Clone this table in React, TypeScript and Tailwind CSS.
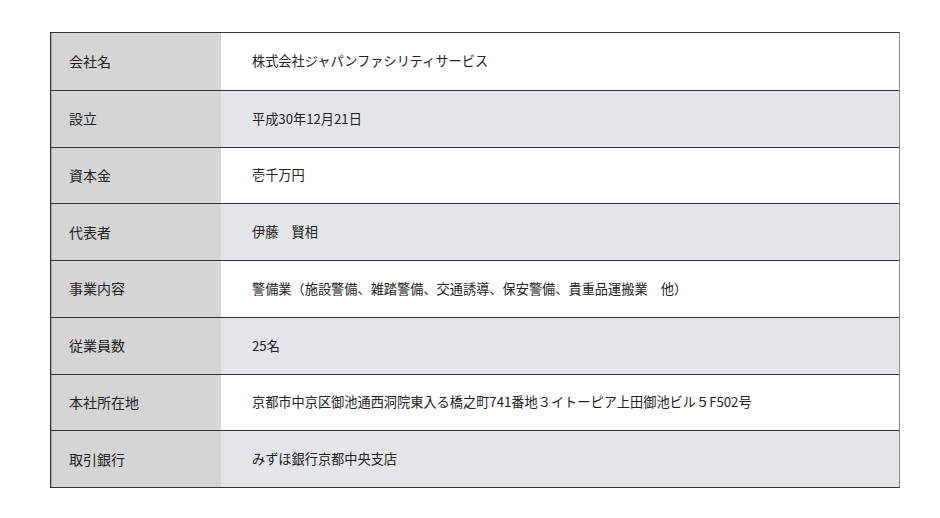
const ROWS: [string, string][] = [
  ["会社名", "株式会社ジャパンファシリティサービス"],
  ["設立", "平成30年12月21日"],
  ["資本金", "壱千万円"],
  ["代表者", "伊藤　賢相"],
  ["事業内容", "警備業（施設警備、雑踏警備、交通誘導、保安警備、貴重品運搬業　他）"],
  ["従業員数", "25名"],
  ["本社所在地", "京都市中京区御池通西洞院東入る橋之町741番地３イトーピア上田御池ビル５F502号"],
  ["取引銀行", "みずほ銀行京都中央支店"],
];

export default function App() {
  return (
    <div
      className="w-[940px] h-[518px] bg-white pt-[32px] pl-[50px] text-[#222] text-[14px]"
      style={{ fontFamily: '"Noto Sans CJK JP", "Noto Sans", sans-serif' }}
    >
      <div className="w-[850px] border border-[#333] border-r-[#888]">
        {ROWS.map(([label, value], i) => (
          <div
            key={label}
            className={`flex h-[56.75px] ${i > 0 ? "border-t border-[#333]" : ""}`}
          >
            <div className="w-[170px] shrink-0 bg-[#d5d5d5] flex items-center pl-[17px] border-l border-[#aaa]">
              {label}
            </div>
            <div
              className={`flex-1 flex items-center pl-[31px] text-[13.2px] ${
                i % 2 === 1 ? "bg-[#e4e5e9]" : "bg-white"
              }`}
            >
              {value}
            </div>
          </div>
        ))}
      </div>
    </div>
  );
}
